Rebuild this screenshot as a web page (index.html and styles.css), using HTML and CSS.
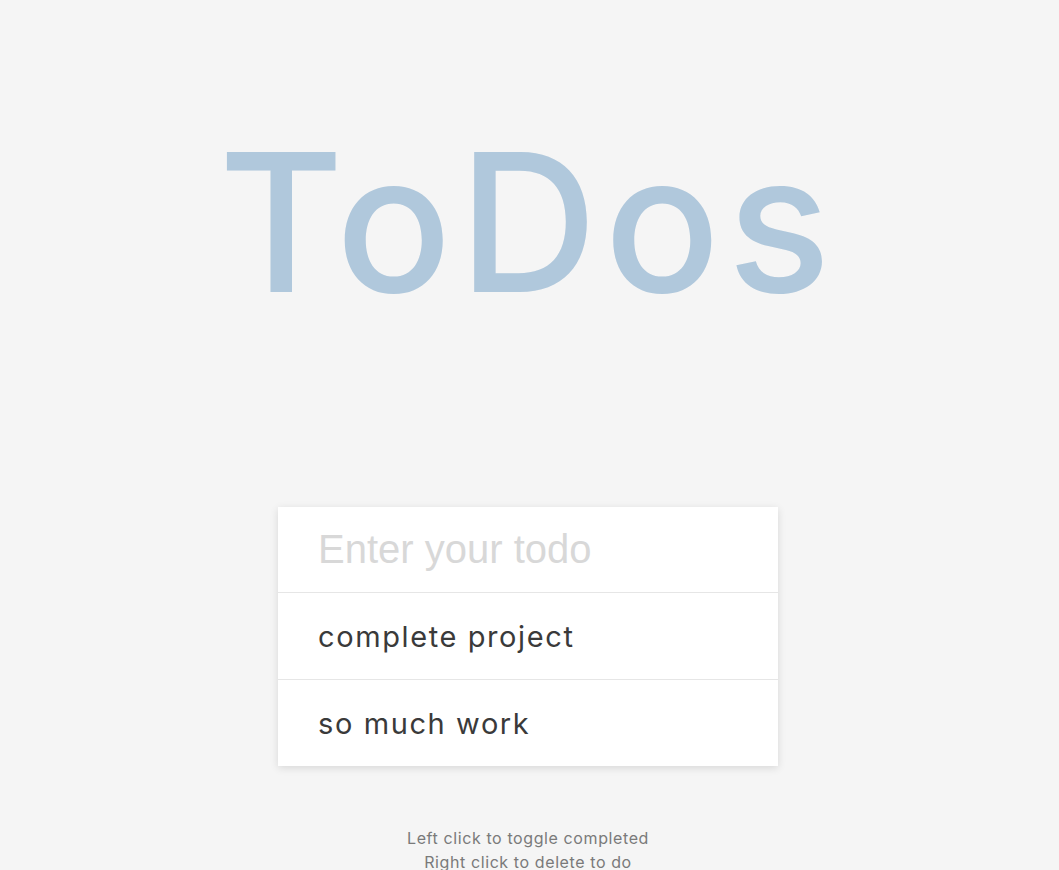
FILE: index.html
```html
<!DOCTYPE html>
<html lang="en">
<head>
<meta charset="utf-8">
<title>ToDos</title>
<link rel="stylesheet" href="styles.css">
</head>
<body>
<main class="app">
  <h1 class="title">ToDos</h1>
  <section class="card">
    <input class="new-todo" type="text" placeholder="Enter your todo">
    <ul class="todo-list">
      <li class="todo">complete project</li>
      <li class="todo">so much work</li>
    </ul>
  </section>
  <p class="hint">Left click to toggle completed<br>Right click to delete to do</p>
</main>
</body>
</html>
```
FILE: styles.css
```css
html, body {
  margin: 0;
  padding: 0;
  background: #f5f5f5;
}
body {
  font-family: "Inter", "Open Sans", sans-serif;
}
.app {
  display: flex;
  flex-direction: column;
  align-items: center;
  padding-right: 3px;
}
.title {
  margin: 0;
  padding-top: 126px;
  height: 507px;
  box-sizing: border-box;
  font-family: "Inter", sans-serif;
  font-weight: 500;
  font-size: 192px;
  line-height: 1;
  letter-spacing: 7px;
  color: #b0c8dc;
}
.card {
  width: 500px;
  background: #fff;
  box-shadow: 0 2px 8px rgba(0,0,0,0.12);
  display: flex;
  flex-direction: column;
}
.new-todo {
  height: 85px;
  border: 0;
  outline: none;
  padding: 0 40px;
  margin: 0;
  font-family: "Liberation Sans", Arial, sans-serif;
  font-size: 40px;
  color: #333;
  background: transparent;
  box-sizing: border-box;
}
.new-todo::placeholder {
  color: #d8d8d8;
}
.todo-list {
  list-style: none;
  margin: 0;
  padding: 0;
}
.todo {
  height: 87px;
  box-sizing: border-box;
  border-top: 1px solid #e6e6e6;
  padding: 0 40px;
  display: flex;
  align-items: center;
  font-size: 29px;
  letter-spacing: 1.6px;
  color: #3a3a3a;
}
.hint {
  margin: 60px 0 0;
  text-align: center;
  font-size: 16px;
  line-height: 24px;
  letter-spacing: 0.6px;
  color: #7a7a7a;
}
```
